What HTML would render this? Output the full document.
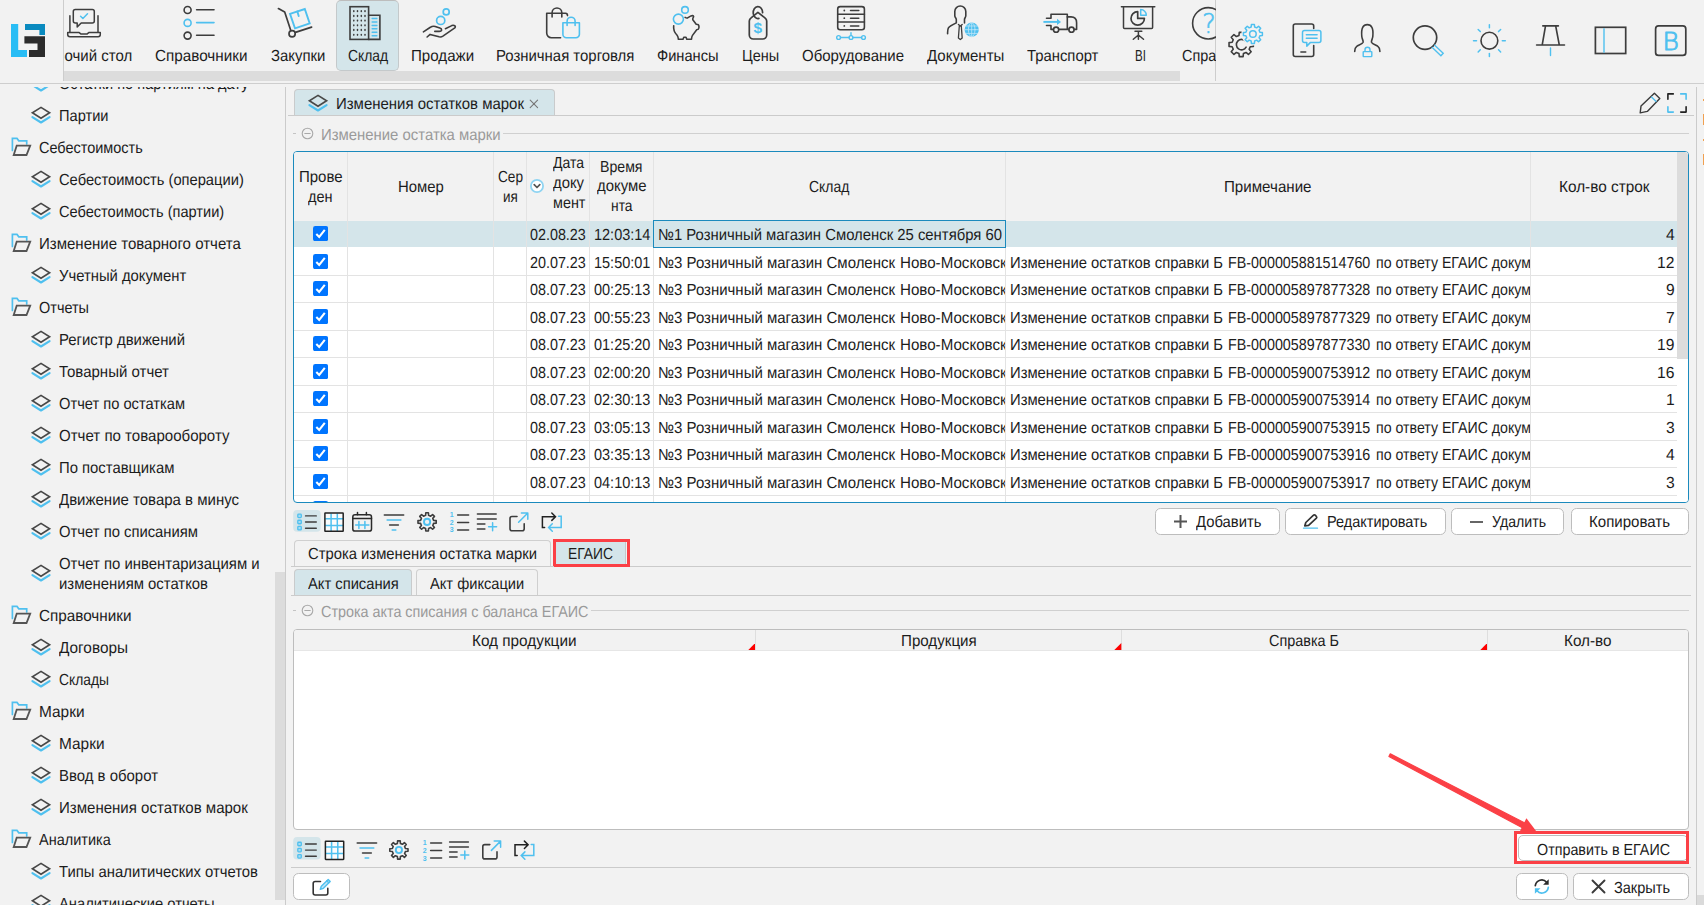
<!DOCTYPE html><html lang="ru"><head><meta charset="utf-8"><title>Изменения остатков марок</title><style>
html,body{margin:0;padding:0}
body{width:1704px;height:905px;overflow:hidden;background:#f2f2f2;position:relative;font-family:"Liberation Sans", sans-serif;font-size:16px;color:#1c1c1c}
.b{position:absolute;box-sizing:border-box}
.t{position:absolute;white-space:nowrap;transform-origin:0 50%;text-rendering:geometricPrecision}
.clip{position:absolute;overflow:hidden}
.btn{position:absolute;box-sizing:border-box;background:#fff;border:1px solid #bdbdbd;border-radius:5.500px}

</style></head><body>
<div class="b" style="left:336.00px;top:0.00px;width:63.00px;height:71.00px;background:#d4e5ea;border:1px solid #c4c9cb;border-top-color:#bdbdbd;border-radius:5px"></div>
<div class="b" style="left:64.00px;top:71.00px;width:1116.00px;height:10.00px;background:#dcdcdc"></div>
<div class="b" style="left:63.00px;top:0.00px;width:1.00px;height:81.00px;background:#cdcdcd"></div>
<div class="b" style="left:1215.00px;top:0.00px;width:1.00px;height:81.00px;background:#cdcdcd"></div>
<div class="b" style="left:0.00px;top:83.00px;width:1704.00px;height:1.00px;background:#cecece"></div>
<svg class="b" style="left:0.00px;top:0.00px;" width="64" height="84" viewBox="0 0 64 84" fill="none" stroke-linecap="round" stroke-linejoin="round">
<path d="M11 24h7.2v26H27v7H11z" fill="#29bdf5"/>
<path d="M25 24h20v11h-5.6v-5H25z" fill="#0a8abf"/>
<path d="M24.4 36.2H45V57H29v-7h8.5v-6.5H24.4z" fill="#2c2c2c"/></svg>
<div class="clip" style="left:64.2px;top:40px;width:80px;height:30px"><div class="t" style="left:-26.10px;top:7px;line-height:20px;transform:scaleX(0.9379);">Рабочий стол</div></div>
<div class="t" style="left:155.00px;top:47px;line-height:20px;transform:scaleX(0.9542);">Справочники</div>
<div class="t" style="left:270.60px;top:47px;line-height:20px;transform:scaleX(0.9324);">Закупки</div>
<div class="t" style="left:347.80px;top:47px;line-height:20px;transform:scaleX(0.8680);">Склад</div>
<div class="t" style="left:410.50px;top:47px;line-height:20px;transform:scaleX(0.9442);">Продажи</div>
<div class="t" style="left:496.20px;top:47px;line-height:20px;transform:scaleX(0.9324);">Розничная торговля</div>
<div class="t" style="left:657.30px;top:47px;line-height:20px;transform:scaleX(0.9171);">Финансы</div>
<div class="t" style="left:742.30px;top:47px;line-height:20px;transform:scaleX(0.9056);">Цены</div>
<div class="t" style="left:802.40px;top:47px;line-height:20px;transform:scaleX(0.9373);">Оборудование</div>
<div class="t" style="left:926.90px;top:47px;line-height:20px;transform:scaleX(0.9371);">Документы</div>
<div class="t" style="left:1027.30px;top:47px;line-height:20px;transform:scaleX(0.9278);">Транспорт</div>
<div class="t" style="left:1134.70px;top:47px;line-height:20px;transform:scaleX(0.7207);">BI</div>
<div class="clip" style="left:1170px;top:40px;width:45.5px;height:30px"><div class="t" style="left:12.40px;top:7px;line-height:20px;transform:scaleX(0.9002);">Справка</div></div>
<svg class="b" style="left:0.00px;top:0.00px;pointer-events:none" width="1216" height="84" viewBox="0 0 1216 84" fill="none" stroke-linecap="round" stroke-linejoin="round"><g stroke="#3d3d3d" stroke-width="1.5"><path d="M69.9 15.8V32M98 15.8V32"/><path d="M67.7 32.6h11.5l1.6 1.3h6.4l1.6-1.3h11.5v2a2.2 2.2 0 0 1-2.2 2.2H69.9a2.2 2.2 0 0 1-2.2-2.2z"/><path d="M75.3 9.6h17a2 2 0 0 1 2 2v9.4a2 2 0 0 1-2 2H81.2l-4 3.9v-3.9h-1.9a2 2 0 0 1-2-2v-9.4a2 2 0 0 1 2-2z"/></g><path d="M80.6 16.2l2.3 2.3 4.6-4.8" stroke="#4fc0ef" stroke-width="1.5"/><circle cx="187.6" cy="10" r="3.5" stroke="#3d3d3d" stroke-width="1.6"/><path d="M196.6 9.7H214" stroke="#3d3d3d" stroke-width="1.6"/><circle cx="187.6" cy="22.9" r="3.5" stroke="#4fc0ef" stroke-width="1.6"/><path d="M196.6 22.599999999999998H214" stroke="#4fc0ef" stroke-width="1.6"/><circle cx="187.6" cy="35.6" r="3.5" stroke="#3d3d3d" stroke-width="1.6"/><path d="M196.6 35.300000000000004H214" stroke="#3d3d3d" stroke-width="1.6"/><g stroke="#3d3d3d" stroke-width="1.7"><path d="M278.4 8.6l6.3 3.5 6 18.2"/><circle cx="292.1" cy="33.8" r="3.1"/><path d="M295.4 32.4l16.2-5.3"/></g><g stroke="#4fc0ef" stroke-width="1.9" stroke-linejoin="miter"><path d="M290 13.9l14.8-4.9 4.9 14.5-14.7 4.8z"/><path d="M297.3 11.4l1.4 4.6"/></g><g stroke="#3d3d3d" stroke-width="1.6" stroke-linejoin="miter"><rect x="350" y="6.7" width="18.6" height="32.7"/><path d="M368.6 15.3h11.3v24.1h-11.3"/></g><g fill="#3d3d3d"><ellipse cx="353.8" cy="11.2" rx="0.8" ry="1.15"/><ellipse cx="353.8" cy="16" rx="0.8" ry="1.15"/><ellipse cx="353.8" cy="20.6" rx="0.8" ry="1.15"/><ellipse cx="353.8" cy="25.3" rx="0.8" ry="1.15"/><ellipse cx="353.8" cy="30" rx="0.8" ry="1.15"/><ellipse cx="353.8" cy="34.8" rx="0.8" ry="1.15"/><ellipse cx="357.5" cy="11.2" rx="0.8" ry="1.15"/><ellipse cx="357.5" cy="16" rx="0.8" ry="1.15"/><ellipse cx="357.5" cy="20.6" rx="0.8" ry="1.15"/><ellipse cx="357.5" cy="25.3" rx="0.8" ry="1.15"/><ellipse cx="357.5" cy="30" rx="0.8" ry="1.15"/><ellipse cx="357.5" cy="34.8" rx="0.8" ry="1.15"/><ellipse cx="361.3" cy="11.2" rx="0.8" ry="1.15"/><ellipse cx="361.3" cy="16" rx="0.8" ry="1.15"/><ellipse cx="361.3" cy="20.6" rx="0.8" ry="1.15"/><ellipse cx="361.3" cy="25.3" rx="0.8" ry="1.15"/><ellipse cx="361.3" cy="30" rx="0.8" ry="1.15"/><ellipse cx="361.3" cy="34.8" rx="0.8" ry="1.15"/><ellipse cx="365" cy="11.2" rx="0.8" ry="1.15"/><ellipse cx="365" cy="16" rx="0.8" ry="1.15"/><ellipse cx="365" cy="20.6" rx="0.8" ry="1.15"/><ellipse cx="365" cy="25.3" rx="0.8" ry="1.15"/><ellipse cx="365" cy="30" rx="0.8" ry="1.15"/><ellipse cx="365" cy="34.8" rx="0.8" ry="1.15"/></g><g stroke="#4fc0ef" stroke-width="1.5"><path d="M372.2 18.6h4.6"/><path d="M372.2 22h4.6"/><path d="M372.2 25.5h4.6"/><path d="M372.2 28.8h4.6"/><path d="M372.2 32.3h4.6"/><path d="M372.2 35.8h4.6"/></g><g stroke="#4fc0ef" stroke-width="1.7"><circle cx="446.2" cy="11.9" r="3"/><circle cx="440.7" cy="20.4" r="4.1"/></g><g stroke="#3d3d3d" stroke-width="1.6"><path d="M423.4 31.8l6.6-4.3c2-1.2 3.4-1.5 5.2-1l4.6 1.6c2.4.8 2.6 3.2-.6 3.3h-4.4"/><path d="M445.4 28.7l6.4-3.1c2.2-1 4.6.6 3 2.3l-11.9 8.3c-1.4.9-2.4.9-3.8.6l-9-2.4-3 2.6"/></g><g stroke="#3d3d3d" stroke-width="1.6"><path d="M560.6 37.7h-9.3a4.6 4.6 0 0 1-4.6-4.6V13.3h18.8c1.3 0 2 .7 2 2.3"/><path d="M552.1 17v-4.2a4.85 4.85 0 0 1 9.7 0V17"/></g><g stroke="#4fc0ef" stroke-width="1.6"><path d="M562.9 22.7h16.5v11.6a3.5 3.5 0 0 1-3.5 3.5h-9.5a3.5 3.5 0 0 1-3.5-3.5z"/><path d="M567.1 25.4v-4.2a4 4 0 0 1 8 0v4.2"/></g><g stroke="#4fc0ef" stroke-width="1.6"><circle cx="685" cy="9.9" r="3.3"/><circle cx="678.4" cy="19.1" r="5"/></g><path d="M673.7 25.8c-.6 4 .9 6.800 3.4 9.5 1 1.200 1.100 2.500 1.300 4h4.600l.8-2h2.200l.8 2h4.700c.1-1.600.2-2.800 1-3.900l4.200-5.600c1.700-.3 2-.4 2.200-1.800.3-2.400.2-3-1.100-3.500l-1.600-.2-3.400-4.500c-.5-1.300 1-2.500.8-3.500-.2-.9-1.600-.8-2.600-.4l-3.400 2c-.8.300-1.700 0-2.500-.5" stroke="#3d3d3d" stroke-width="1.6"/><g stroke="#3d3d3d" stroke-width="1.7"><path d="M757.9 12.3l7 5.500c1.300 1 1.800 1.900 1.800 3.300V35a4 4 0 0 1-4 4h-9.400a4 4 0 0 1-4-4V21.100c0-1.400.5-2.300 1.800-3.300z"/><path d="M762.600 12.700A4.700 6 0 1 0 758.900 18.400"/></g><text x="757.9" y="33.400" text-anchor="middle" font-family="Liberation Sans, sans-serif" font-weight="bold" font-size="15.500" fill="#4fc0ef" stroke="none">$</text><g stroke="#3d3d3d" stroke-width="1.6"><rect x="837.7" y="6.600" width="26.700" height="23.200" rx="2.500"/><path d="M837.700 14.300h26.700M837.700 22h26.700"/><path d="M850.500 10.500h8.300M850.500 18.200h8.300M850.500 25.900h8.300" stroke-width="1.500"/></g><g fill="#3d3d3d"><circle cx="844.300" cy="10.500" r="0.900"/><circle cx="844.300" cy="18.200" r="0.900"/><circle cx="844.300" cy="25.900" r="0.900"/></g><g stroke="#4fc0ef" stroke-width="1.400"><path d="M851 32.600v3M840.500 37.500h8.600M853 37.500h8.600"/><circle cx="838.600" cy="37.500" r="1.900"/><circle cx="851" cy="37.500" r="1.900"/><circle cx="863.500" cy="37.500" r="1.900"/></g><g stroke="#3d3d3d" stroke-width="1.600"><path d="M964.500 23v-3.600c0-1.400 1.300-2 1.300-3.600v-4.300a5.500 5.500 0 0 0-11 0v4.300c0 1.600 1.500 2.200 1.500 3.600v3.500c-3.500 1.700-6.500 3.200-7.800 4.800-1 1.300-.9 2.600-.9 6"/><path d="M958.400 24.400l1.900 1.600 1.900-1.600M959.300 26l-.9 12 1.900 1.500 1.900-1.500-.9-12" stroke-width="1.300"/></g><circle cx="971.700" cy="29.700" r="7.100" fill="#4fc0ef"/><g stroke="#bfe6f8" stroke-width="0.800"><ellipse cx="971.700" cy="29.700" rx="3.300" ry="7"/><path d="M971.700 22.700v14M964.800 29.700h13.800M965.700 26h12M965.700 33.400h12"/></g><g stroke="#3d3d3d" stroke-width="1.600"><path d="M1046.500 18.200h4.500v-3.900h16.300v15"/><path d="M1046.500 25.500h4.500v3.900h2.400M1058.900 29.400h9.900M1074.300 29.400h2.300v-6.600c0-3.600-2.200-5.900-5.600-5.900h-3.700"/><circle cx="1056.100" cy="29.700" r="2.600"/><circle cx="1071.500" cy="29.700" r="2.600"/></g><path d="M1043.400 21.900h14" stroke="#4fc0ef" stroke-width="1.900" stroke-linecap="butt"/><path d="M1057 18.700l4 3.200-4 3.200z" fill="#4fc0ef"/><g stroke="#3d3d3d" stroke-width="1.500"><path d="M1121.400 6.800h33.400M1123.500 6.800v20.700a1 1 0 0 0 1 1h27.100a1 1 0 0 0 1-1V6.800"/><path d="M1135 31.300h6.800M1138.400 31.300v8M1138.400 35l-5.100 4.300M1138.400 35l5.100 4.300"/><path d="M1137.700 11.700a6.700 6.700 0 1 0 6.700 6.700h-6.700z" stroke-width="1.700"/></g><path d="M1140.700 9.600a5.600 5.600 0 0 1 5.600 5.600h-5.600z" stroke="#4fc0ef" stroke-width="1.500"/></svg>
<div class="clip" style="left:1180px;top:0;width:35.5px;height:50px"><svg class="b" style="left:0.00px;top:0.00px;" width="60" height="50" viewBox="0 0 60 50" fill="none" stroke-linecap="round" stroke-linejoin="round"><circle cx="28.300" cy="23.300" r="15.700" stroke="#3d3d3d" stroke-width="1.600"/><text x="28.800" y="33.200" text-anchor="middle" font-family="DejaVu Sans, Liberation Sans, sans-serif" font-weight="200" font-size="26" fill="#4fc0ef" stroke="#4fc0ef" stroke-width="0.500">?</text></svg></div>
<svg class="b" style="left:1216.00px;top:0.00px;" width="488" height="84" viewBox="1216 0 488 84" fill="none" stroke-linecap="round" stroke-linejoin="round"><path d="M1238.96 35.47 L1239.28 32.35 L1243.12 32.35 L1243.44 35.47 L1246.00 36.53 L1248.43 34.55 L1251.15 37.27 L1249.17 39.70 L1250.23 42.26 L1253.35 42.58 L1253.35 46.42 L1250.23 46.74 L1249.17 49.30 L1251.15 51.73 L1248.43 54.45 L1246.00 52.47 L1243.44 53.53 L1243.12 56.65 L1239.28 56.65 L1238.96 53.53 L1236.40 52.47 L1233.97 54.45 L1231.25 51.73 L1233.23 49.30 L1232.17 46.74 L1229.05 46.42 L1229.05 42.58 L1232.17 42.26 L1233.23 39.70 L1231.25 37.27 L1233.97 34.55 L1236.40 36.53Z" stroke="#3d3d3d" stroke-width="1.600" fill="#f2f2f2"/><path d="M1245.500 41.200a5.200 5.200 0 1 0 .6 6" stroke="#3d3d3d" stroke-width="1.600"/><circle cx="1252.900" cy="34" r="11.500" fill="#f2f2f2"/><path d="M1251.16 27.01 L1251.40 24.52 L1254.40 24.52 L1254.64 27.01 L1256.61 27.83 L1258.54 26.23 L1260.67 28.36 L1259.07 30.29 L1259.89 32.26 L1262.38 32.50 L1262.38 35.50 L1259.89 35.74 L1259.07 37.71 L1260.67 39.64 L1258.54 41.77 L1256.61 40.17 L1254.64 40.99 L1254.40 43.48 L1251.40 43.48 L1251.16 40.99 L1249.19 40.17 L1247.26 41.77 L1245.13 39.64 L1246.73 37.71 L1245.91 35.74 L1243.42 35.50 L1243.42 32.50 L1245.91 32.26 L1246.73 30.29 L1245.13 28.36 L1247.26 26.23 L1249.19 27.83Z" stroke="#4fc0ef" stroke-width="1.500" fill="#f2f2f2"/><circle cx="1252.900" cy="34" r="3.300" stroke="#4fc0ef" stroke-width="1.500"/><g stroke="#3d3d3d" stroke-width="1.600"><path d="M1313.700 45.500v9a2 2 0 0 1-2 2h-16.400a2 2 0 0 1-2-2V26a2 2 0 0 1 2-2h16.400a2 2 0 0 1 2 2v2.500"/><path d="M1300.900 52h4.800"/></g><g stroke="#4fc0ef" stroke-width="1.500"><path d="M1304.500 30.500h14.400a2 2 0 0 1 2 2v7.900a2 2 0 0 1-2 2h-8.400l-3.700 3.700v-3.700h-2.300a2 2 0 0 1-2-2v-7.900a2 2 0 0 1 2-2z"/><path d="M1306.300 34.700h10.800M1306.300 38.200h10.800"/></g><path d="M1354.700 51.500c0-2.600.3-4 2-5.200 1.600-1.200 5.900-2.300 6.400-4 .4-1.600-1-3-1.300-5.800-.3-3.300-.6-6.400.9-9.200 1.900-3.600 7.300-3.600 9.200 0 1.500 2.800 1.200 5.900.9 9.200-.3 2.800-1.700 4.200-1.300 5.800.5 1.700 4.800 2.800 6.400 4 1.700 1.200 2 2.600 2 5.200" stroke="#3d3d3d" stroke-width="1.600"/><g stroke="#4fc0ef" stroke-width="1.400"><rect x="1363.200" y="51.600" width="8.600" height="5" rx="0.500"/><path d="M1365 51.400v-1.700a2.500 2.500 0 0 1 5 0v1.700"/></g><circle cx="1425" cy="37.600" r="11.700" stroke="#3d3d3d" stroke-width="1.700"/><path d="M1434.700 45.200l8.500 8-2.300 2.500-8.600-8.100" stroke="#4fc0ef" stroke-width="1.400" stroke-linejoin="miter"/><circle cx="1489.400" cy="40.700" r="8.400" stroke="#3d3d3d" stroke-width="1.600"/><g stroke="#4fc0ef" stroke-width="1.500"><path d="M1502.30 40.70L1505.30 40.70"/><path d="M1498.52 49.82L1500.64 51.94"/><path d="M1489.40 53.60L1489.40 56.60"/><path d="M1480.28 49.82L1478.16 51.94"/><path d="M1476.50 40.70L1473.50 40.70"/><path d="M1480.28 31.58L1478.16 29.46"/><path d="M1489.40 27.80L1489.40 24.80"/><path d="M1498.52 31.58L1500.64 29.46"/></g><g stroke="#3d3d3d" stroke-width="1.600"><path d="M1542.800 25.900h15.600M1545.500 26l-3.300 19M1555.700 26l3.600 19M1536.600 45h27.900"/></g><path d="M1550.500 47.900v7.700" stroke="#4fc0ef" stroke-width="1.400"/><rect x="1595.400" y="27.300" width="30.300" height="26.200" stroke="#3d3d3d" stroke-width="1.700" stroke-linejoin="miter"/><path d="M1604 28.200v24.500" stroke="#4fc0ef" stroke-width="1.400" stroke-linecap="butt"/><rect x="1655.600" y="25.900" width="30.200" height="29.500" rx="3" stroke="#3d3d3d" stroke-width="1.700"/><text x="1670.600" y="49.800" text-anchor="middle" font-family="DejaVu Sans, Liberation Sans, sans-serif" font-weight="200" font-size="25" fill="#4fc0ef" stroke="#4fc0ef" stroke-width="1">B</text></svg>
<div class="clip" style="left:0;top:87px;width:285px;height:818px">
<svg class="b" style="left:30.00px;top:-14.20px;" width="22" height="20" viewBox="0 0 22 20" fill="none" stroke-linecap="round" stroke-linejoin="round"><path d="M2.400 12.100l8.600 5.400 8.600-5.400" stroke="#4fc0ef" stroke-width="2.100"/><path d="M11 2.400l8.600 5.400-8.600 5.400-8.600-5.400z" stroke="#484848" stroke-width="1.650" stroke-linejoin="miter"/></svg>
<div class="t" style="left:58.80px;top:-12px;line-height:20px;transform:scaleX(0.9114);">Остатки по партиям на дату</div>
<svg class="b" style="left:30.00px;top:17.80px;" width="22" height="20" viewBox="0 0 22 20" fill="none" stroke-linecap="round" stroke-linejoin="round"><path d="M2.400 12.100l8.600 5.400 8.600-5.400" stroke="#4fc0ef" stroke-width="2.100"/><path d="M11 2.400l8.600 5.400-8.600 5.400-8.600-5.400z" stroke="#484848" stroke-width="1.650" stroke-linejoin="miter"/></svg>
<div class="t" style="left:58.80px;top:20px;line-height:20px;transform:scaleX(0.9140);">Партии</div>
<svg class="b" style="left:10.50px;top:49.60px;" width="21" height="20" viewBox="0 0 21 20" fill="none" stroke-linecap="round" stroke-linejoin="round"><path d="M1.400 13.500V1.400h4.600l1.800 2.400h7.900v3.200" stroke="#4fc0ef" stroke-width="1.700" stroke-linejoin="miter"/><path d="M5.700 8.700h13.500l-3.700 9.300H2.700z" stroke="#555" stroke-width="1.800" stroke-linejoin="miter"/></svg>
<div class="t" style="left:38.70px;top:52px;line-height:20px;transform:scaleX(0.9041);">Себестоимость</div>
<svg class="b" style="left:30.00px;top:81.80px;" width="22" height="20" viewBox="0 0 22 20" fill="none" stroke-linecap="round" stroke-linejoin="round"><path d="M2.400 12.100l8.600 5.400 8.600-5.400" stroke="#4fc0ef" stroke-width="2.100"/><path d="M11 2.400l8.600 5.400-8.600 5.400-8.600-5.400z" stroke="#484848" stroke-width="1.650" stroke-linejoin="miter"/></svg>
<div class="t" style="left:58.80px;top:84px;line-height:20px;transform:scaleX(0.9189);">Себестоимость (операции)</div>
<svg class="b" style="left:30.00px;top:113.80px;" width="22" height="20" viewBox="0 0 22 20" fill="none" stroke-linecap="round" stroke-linejoin="round"><path d="M2.400 12.100l8.600 5.400 8.600-5.400" stroke="#4fc0ef" stroke-width="2.100"/><path d="M11 2.400l8.600 5.400-8.600 5.400-8.600-5.400z" stroke="#484848" stroke-width="1.650" stroke-linejoin="miter"/></svg>
<div class="t" style="left:58.80px;top:116px;line-height:20px;transform:scaleX(0.9121);">Себестоимость (партии)</div>
<svg class="b" style="left:10.50px;top:145.60px;" width="21" height="20" viewBox="0 0 21 20" fill="none" stroke-linecap="round" stroke-linejoin="round"><path d="M1.400 13.500V1.400h4.600l1.800 2.400h7.900v3.200" stroke="#4fc0ef" stroke-width="1.700" stroke-linejoin="miter"/><path d="M5.700 8.700h13.500l-3.700 9.300H2.700z" stroke="#555" stroke-width="1.800" stroke-linejoin="miter"/></svg>
<div class="t" style="left:38.70px;top:148px;line-height:20px;transform:scaleX(0.9389);">Изменение товарного отчета</div>
<svg class="b" style="left:30.00px;top:177.80px;" width="22" height="20" viewBox="0 0 22 20" fill="none" stroke-linecap="round" stroke-linejoin="round"><path d="M2.400 12.100l8.600 5.400 8.600-5.400" stroke="#4fc0ef" stroke-width="2.100"/><path d="M11 2.400l8.600 5.400-8.600 5.400-8.600-5.400z" stroke="#484848" stroke-width="1.650" stroke-linejoin="miter"/></svg>
<div class="t" style="left:58.80px;top:180px;line-height:20px;transform:scaleX(0.9270);">Учетный документ</div>
<svg class="b" style="left:10.50px;top:209.60px;" width="21" height="20" viewBox="0 0 21 20" fill="none" stroke-linecap="round" stroke-linejoin="round"><path d="M1.400 13.500V1.400h4.600l1.800 2.400h7.900v3.200" stroke="#4fc0ef" stroke-width="1.700" stroke-linejoin="miter"/><path d="M5.700 8.700h13.500l-3.700 9.300H2.700z" stroke="#555" stroke-width="1.800" stroke-linejoin="miter"/></svg>
<div class="t" style="left:38.70px;top:212px;line-height:20px;transform:scaleX(0.9040);">Отчеты</div>
<svg class="b" style="left:30.00px;top:241.80px;" width="22" height="20" viewBox="0 0 22 20" fill="none" stroke-linecap="round" stroke-linejoin="round"><path d="M2.400 12.100l8.600 5.400 8.600-5.400" stroke="#4fc0ef" stroke-width="2.100"/><path d="M11 2.400l8.600 5.400-8.600 5.400-8.600-5.400z" stroke="#484848" stroke-width="1.650" stroke-linejoin="miter"/></svg>
<div class="t" style="left:58.80px;top:244px;line-height:20px;transform:scaleX(0.9305);">Регистр движений</div>
<svg class="b" style="left:30.00px;top:273.80px;" width="22" height="20" viewBox="0 0 22 20" fill="none" stroke-linecap="round" stroke-linejoin="round"><path d="M2.400 12.100l8.600 5.400 8.600-5.400" stroke="#4fc0ef" stroke-width="2.100"/><path d="M11 2.400l8.600 5.400-8.600 5.400-8.600-5.400z" stroke="#484848" stroke-width="1.650" stroke-linejoin="miter"/></svg>
<div class="t" style="left:58.80px;top:276px;line-height:20px;transform:scaleX(0.9388);">Товарный отчет</div>
<svg class="b" style="left:30.00px;top:305.80px;" width="22" height="20" viewBox="0 0 22 20" fill="none" stroke-linecap="round" stroke-linejoin="round"><path d="M2.400 12.100l8.600 5.400 8.600-5.400" stroke="#4fc0ef" stroke-width="2.100"/><path d="M11 2.400l8.600 5.400-8.600 5.400-8.600-5.400z" stroke="#484848" stroke-width="1.650" stroke-linejoin="miter"/></svg>
<div class="t" style="left:58.80px;top:308px;line-height:20px;transform:scaleX(0.9168);">Отчет по остаткам</div>
<svg class="b" style="left:30.00px;top:337.80px;" width="22" height="20" viewBox="0 0 22 20" fill="none" stroke-linecap="round" stroke-linejoin="round"><path d="M2.400 12.100l8.600 5.400 8.600-5.400" stroke="#4fc0ef" stroke-width="2.100"/><path d="M11 2.400l8.600 5.400-8.600 5.400-8.600-5.400z" stroke="#484848" stroke-width="1.650" stroke-linejoin="miter"/></svg>
<div class="t" style="left:58.80px;top:340px;line-height:20px;transform:scaleX(0.9408);">Отчет по товарообороту</div>
<svg class="b" style="left:30.00px;top:369.80px;" width="22" height="20" viewBox="0 0 22 20" fill="none" stroke-linecap="round" stroke-linejoin="round"><path d="M2.400 12.100l8.600 5.400 8.600-5.400" stroke="#4fc0ef" stroke-width="2.100"/><path d="M11 2.400l8.600 5.400-8.600 5.400-8.600-5.400z" stroke="#484848" stroke-width="1.650" stroke-linejoin="miter"/></svg>
<div class="t" style="left:58.80px;top:372px;line-height:20px;transform:scaleX(0.9283);">По поставщикам</div>
<svg class="b" style="left:30.00px;top:401.80px;" width="22" height="20" viewBox="0 0 22 20" fill="none" stroke-linecap="round" stroke-linejoin="round"><path d="M2.400 12.100l8.600 5.400 8.600-5.400" stroke="#4fc0ef" stroke-width="2.100"/><path d="M11 2.400l8.600 5.400-8.600 5.400-8.600-5.400z" stroke="#484848" stroke-width="1.650" stroke-linejoin="miter"/></svg>
<div class="t" style="left:58.80px;top:404px;line-height:20px;transform:scaleX(0.9373);">Движение товара в минус</div>
<svg class="b" style="left:30.00px;top:433.80px;" width="22" height="20" viewBox="0 0 22 20" fill="none" stroke-linecap="round" stroke-linejoin="round"><path d="M2.400 12.100l8.600 5.400 8.600-5.400" stroke="#4fc0ef" stroke-width="2.100"/><path d="M11 2.400l8.600 5.400-8.600 5.400-8.600-5.400z" stroke="#484848" stroke-width="1.650" stroke-linejoin="miter"/></svg>
<div class="t" style="left:58.80px;top:436px;line-height:20px;transform:scaleX(0.9254);">Отчет по списаниям</div>
<svg class="b" style="left:30.00px;top:475.80px;" width="22" height="20" viewBox="0 0 22 20" fill="none" stroke-linecap="round" stroke-linejoin="round"><path d="M2.400 12.100l8.600 5.400 8.600-5.400" stroke="#4fc0ef" stroke-width="2.100"/><path d="M11 2.400l8.600 5.400-8.600 5.400-8.600-5.400z" stroke="#484848" stroke-width="1.650" stroke-linejoin="miter"/></svg>
<div class="t" style="left:58.80px;top:468px;line-height:20px;transform:scaleX(0.9315);">Отчет по инвентаризациям и</div>
<div class="t" style="left:58.80px;top:488px;line-height:20px;transform:scaleX(0.9295);">изменениям остатков</div>
<svg class="b" style="left:10.50px;top:517.60px;" width="21" height="20" viewBox="0 0 21 20" fill="none" stroke-linecap="round" stroke-linejoin="round"><path d="M1.400 13.500V1.400h4.600l1.800 2.400h7.900v3.200" stroke="#4fc0ef" stroke-width="1.700" stroke-linejoin="miter"/><path d="M5.700 8.700h13.500l-3.700 9.300H2.700z" stroke="#555" stroke-width="1.800" stroke-linejoin="miter"/></svg>
<div class="t" style="left:38.70px;top:520px;line-height:20px;transform:scaleX(0.9542);">Справочники</div>
<svg class="b" style="left:30.00px;top:549.80px;" width="22" height="20" viewBox="0 0 22 20" fill="none" stroke-linecap="round" stroke-linejoin="round"><path d="M2.400 12.100l8.600 5.400 8.600-5.400" stroke="#4fc0ef" stroke-width="2.100"/><path d="M11 2.400l8.600 5.400-8.600 5.400-8.600-5.400z" stroke="#484848" stroke-width="1.650" stroke-linejoin="miter"/></svg>
<div class="t" style="left:58.80px;top:552px;line-height:20px;transform:scaleX(0.9594);">Договоры</div>
<svg class="b" style="left:30.00px;top:581.80px;" width="22" height="20" viewBox="0 0 22 20" fill="none" stroke-linecap="round" stroke-linejoin="round"><path d="M2.400 12.100l8.600 5.400 8.600-5.400" stroke="#4fc0ef" stroke-width="2.100"/><path d="M11 2.400l8.600 5.400-8.600 5.400-8.600-5.400z" stroke="#484848" stroke-width="1.650" stroke-linejoin="miter"/></svg>
<div class="t" style="left:58.80px;top:584px;line-height:20px;transform:scaleX(0.8649);">Склады</div>
<svg class="b" style="left:10.50px;top:613.60px;" width="21" height="20" viewBox="0 0 21 20" fill="none" stroke-linecap="round" stroke-linejoin="round"><path d="M1.400 13.500V1.400h4.600l1.800 2.400h7.900v3.200" stroke="#4fc0ef" stroke-width="1.700" stroke-linejoin="miter"/><path d="M5.700 8.700h13.500l-3.700 9.300H2.700z" stroke="#555" stroke-width="1.800" stroke-linejoin="miter"/></svg>
<div class="t" style="left:38.70px;top:616px;line-height:20px;transform:scaleX(0.9630);">Марки</div>
<svg class="b" style="left:30.00px;top:645.80px;" width="22" height="20" viewBox="0 0 22 20" fill="none" stroke-linecap="round" stroke-linejoin="round"><path d="M2.400 12.100l8.600 5.400 8.600-5.400" stroke="#4fc0ef" stroke-width="2.100"/><path d="M11 2.400l8.600 5.400-8.600 5.400-8.600-5.400z" stroke="#484848" stroke-width="1.650" stroke-linejoin="miter"/></svg>
<div class="t" style="left:58.80px;top:648px;line-height:20px;transform:scaleX(0.9630);">Марки</div>
<svg class="b" style="left:30.00px;top:677.80px;" width="22" height="20" viewBox="0 0 22 20" fill="none" stroke-linecap="round" stroke-linejoin="round"><path d="M2.400 12.100l8.600 5.400 8.600-5.400" stroke="#4fc0ef" stroke-width="2.100"/><path d="M11 2.400l8.600 5.400-8.600 5.400-8.600-5.400z" stroke="#484848" stroke-width="1.650" stroke-linejoin="miter"/></svg>
<div class="t" style="left:58.80px;top:680px;line-height:20px;transform:scaleX(0.9340);">Ввод в оборот</div>
<svg class="b" style="left:30.00px;top:709.80px;" width="22" height="20" viewBox="0 0 22 20" fill="none" stroke-linecap="round" stroke-linejoin="round"><path d="M2.400 12.100l8.600 5.400 8.600-5.400" stroke="#4fc0ef" stroke-width="2.100"/><path d="M11 2.400l8.600 5.400-8.600 5.400-8.600-5.400z" stroke="#484848" stroke-width="1.650" stroke-linejoin="miter"/></svg>
<div class="t" style="left:58.80px;top:712px;line-height:20px;transform:scaleX(0.9393);">Изменения остатков марок</div>
<svg class="b" style="left:10.50px;top:741.60px;" width="21" height="20" viewBox="0 0 21 20" fill="none" stroke-linecap="round" stroke-linejoin="round"><path d="M1.400 13.500V1.400h4.600l1.800 2.400h7.900v3.200" stroke="#4fc0ef" stroke-width="1.700" stroke-linejoin="miter"/><path d="M5.700 8.700h13.500l-3.700 9.300H2.700z" stroke="#555" stroke-width="1.800" stroke-linejoin="miter"/></svg>
<div class="t" style="left:38.70px;top:744px;line-height:20px;transform:scaleX(0.9065);">Аналитика</div>
<svg class="b" style="left:30.00px;top:773.80px;" width="22" height="20" viewBox="0 0 22 20" fill="none" stroke-linecap="round" stroke-linejoin="round"><path d="M2.400 12.100l8.600 5.400 8.600-5.400" stroke="#4fc0ef" stroke-width="2.100"/><path d="M11 2.400l8.600 5.400-8.600 5.400-8.600-5.400z" stroke="#484848" stroke-width="1.650" stroke-linejoin="miter"/></svg>
<div class="t" style="left:58.80px;top:776px;line-height:20px;transform:scaleX(0.9276);">Типы аналитических отчетов</div>
<svg class="b" style="left:30.00px;top:805.80px;" width="22" height="20" viewBox="0 0 22 20" fill="none" stroke-linecap="round" stroke-linejoin="round"><path d="M2.400 12.100l8.600 5.400 8.600-5.400" stroke="#4fc0ef" stroke-width="2.100"/><path d="M11 2.400l8.600 5.400-8.600 5.400-8.600-5.400z" stroke="#484848" stroke-width="1.650" stroke-linejoin="miter"/></svg>
<div class="t" style="left:58.80px;top:808px;line-height:20px;transform:scaleX(0.9220);">Аналитические отчеты</div>
</div>
<div class="b" style="left:274.50px;top:572.00px;width:10.00px;height:327.50px;background:#dcdcdc"></div>
<div class="b" style="left:285.00px;top:87.00px;width:1.00px;height:818.00px;background:#cbcbcb"></div>
<div class="b" style="left:1696.00px;top:87.00px;width:1.00px;height:818.00px;background:#cbcbcb"></div>
<div class="b" style="left:1697.00px;top:895.00px;width:7.00px;height:10.00px;background:#dadada"></div>
<div class="b" style="left:1703.00px;top:99.00px;width:1.00px;height:1.50px;background:#f0a050"></div>
<div class="b" style="left:1703.00px;top:114.00px;width:1.00px;height:11.00px;background:#f0a050"></div>
<div class="b" style="left:1703.00px;top:139.00px;width:1.00px;height:1.50px;background:#f0a050"></div>
<div class="b" style="left:1703.00px;top:154.00px;width:1.00px;height:11.00px;background:#f0a050"></div>
<div class="b" style="left:294.00px;top:89.00px;width:260.50px;height:26.50px;background:#d4e5ea;border:1px solid #c9cbcc;border-bottom:none;border-radius:4px 4px 0 0"></div>
<div class="b" style="left:288.00px;top:115.00px;width:1406.00px;height:1.00px;background:#cbcbcb"></div>
<svg class="b" style="left:307.00px;top:93.00px;" width="22" height="20" viewBox="0 0 22 20" fill="none" stroke-linecap="round" stroke-linejoin="round"><path d="M2.400 12.100l8.600 5.400 8.600-5.400" stroke="#4fc0ef" stroke-width="2.100"/><path d="M11 2.400l8.600 5.400-8.600 5.400-8.600-5.400z" stroke="#484848" stroke-width="1.650" stroke-linejoin="miter"/></svg>
<div class="t" style="left:336.00px;top:95px;line-height:20px;transform:scaleX(0.9353);">Изменения остатков марок</div>
<svg class="b" style="left:529.00px;top:98.50px;" width="10" height="10" viewBox="0 0 10 10" fill="none" stroke-linecap="round" stroke-linejoin="round"><path d="M1.200 1.200l7.400 7.400M8.600 1.200l-7.400 7.400" stroke="#777" stroke-width="1.100"/></svg>
<svg class="b" style="left:1630.00px;top:86.00px;" width="34" height="34" viewBox="1630 86 34 34" fill="none" stroke-linecap="round" stroke-linejoin="round"><path d="M1654.400 93.300l5.400 5.100-12.500 13-7.100 1.500.8-6.800z" stroke="#3a3a3a" stroke-width="1.400" stroke-linejoin="round"/><path d="M1651.200 96.700l5.200 5" stroke="#4fc0ef" stroke-width="1.400" stroke-linecap="butt"/></svg>
<svg class="b" style="left:1666.00px;top:92.00px;" width="22" height="22" viewBox="0 0 22 22" fill="none" stroke-linecap="round" stroke-linejoin="round"><path d="M1.900 7.200v-5.300h5.400M14.700 20.100h5.400v-5.300" stroke="#222" stroke-width="1.600" stroke-linejoin="round" stroke-linecap="round"/><path d="M14.700 1.900h5.400v5.300M7.300 20.100h-5.400v-5.300" stroke="#4fc0ef" stroke-width="1.600" stroke-linejoin="round" stroke-linecap="round"/></svg>
<div class="b" style="left:293.00px;top:133.20px;width:3.00px;height:1.00px;background:#c4c4c4"></div><svg class="b" style="left:301.00px;top:127.00px;" width="13" height="13" viewBox="0 0 13 13" fill="none" stroke-linecap="round" stroke-linejoin="round"><circle cx="6.500" cy="6.500" r="5.300" stroke="#a9a9a9" stroke-width="1.100"/><path d="M3.800 6.500h5.400" stroke="#a9a9a9" stroke-width="1.100"/></svg><div class="t" style="left:320.90px;top:126px;line-height:20px;transform:scaleX(0.9309);color:#9a9a9a;">Изменение остатка марки</div><div class="b" style="left:503.00px;top:132.90px;width:1186.00px;height:1.00px;background:#d0d0d0"></div>
<div class="b" style="left:293px;top:151px;width:1396px;height:352px;border:1px solid #1b8abd;border-radius:4px;background:#fff;overflow:hidden">
<div class="b" style="left:0.00px;top:0.00px;width:1394.00px;height:69.00px;background:#f2f2f2"></div>
<div class="b" style="left:0.00px;top:69.00px;width:1383.00px;height:26.00px;background:#d4e5ea"></div>
<div class="b" style="left:0.00px;top:123.00px;width:1383.00px;height:1.00px;background:#e3e3e3"></div>
<div class="b" style="left:0.00px;top:150.00px;width:1383.00px;height:1.00px;background:#e3e3e3"></div>
<div class="b" style="left:0.00px;top:178.00px;width:1383.00px;height:1.00px;background:#e3e3e3"></div>
<div class="b" style="left:0.00px;top:205.00px;width:1383.00px;height:1.00px;background:#e3e3e3"></div>
<div class="b" style="left:0.00px;top:233.00px;width:1383.00px;height:1.00px;background:#e3e3e3"></div>
<div class="b" style="left:0.00px;top:260.00px;width:1383.00px;height:1.00px;background:#e3e3e3"></div>
<div class="b" style="left:0.00px;top:288.00px;width:1383.00px;height:1.00px;background:#e3e3e3"></div>
<div class="b" style="left:0.00px;top:315.00px;width:1383.00px;height:1.00px;background:#e3e3e3"></div>
<div class="b" style="left:0.00px;top:343.00px;width:1383.00px;height:1.00px;background:#e3e3e3"></div>
<div class="b" style="left:0.00px;top:370.00px;width:1383.00px;height:1.00px;background:#e3e3e3"></div>
<div class="b" style="left:53.00px;top:0.00px;width:1.00px;height:351.00px;background:#e3e3e3"></div>
<div class="b" style="left:199.00px;top:0.00px;width:1.00px;height:351.00px;background:#e3e3e3"></div>
<div class="b" style="left:232.00px;top:0.00px;width:1.00px;height:351.00px;background:#e3e3e3"></div>
<div class="b" style="left:295.00px;top:0.00px;width:1.00px;height:351.00px;background:#e3e3e3"></div>
<div class="b" style="left:359.00px;top:0.00px;width:1.00px;height:351.00px;background:#e3e3e3"></div>
<div class="b" style="left:711.00px;top:0.00px;width:1.00px;height:351.00px;background:#e3e3e3"></div>
<div class="b" style="left:1236.00px;top:0.00px;width:1.00px;height:351.00px;background:#e3e3e3"></div>
<div class="b" style="left:1383.00px;top:0.00px;width:11.00px;height:351.00px;background:#fff"></div>
<div class="b" style="left:1383.00px;top:0.00px;width:10.50px;height:206.70px;background:#dcdcdc"></div>
<div class="t" style="left:4.70px;top:16px;line-height:20px;transform:scaleX(0.9373);">Прове</div>
<div class="t" style="left:14.25px;top:36px;line-height:20px;transform:scaleX(0.9048);">ден</div>
<div class="t" style="left:103.60px;top:26px;line-height:20px;transform:scaleX(0.9299);">Номер</div>
<div class="t" style="left:203.50px;top:16px;line-height:20px;transform:scaleX(0.8515);">Сер</div>
<div class="t" style="left:208.60px;top:36px;line-height:20px;transform:scaleX(0.8405);">ия</div>
<div class="t" style="left:259.40px;top:2px;line-height:20px;transform:scaleX(0.8748);">Дата</div>
<div class="t" style="left:259.40px;top:22px;line-height:20px;transform:scaleX(0.9275);">доку</div>
<div class="t" style="left:259.40px;top:42px;line-height:20px;transform:scaleX(0.8984);">мент</div>
<div class="t" style="left:306.05px;top:6px;line-height:20px;transform:scaleX(0.8828);">Время</div>
<div class="t" style="left:302.55px;top:25px;line-height:20px;transform:scaleX(0.9315);">докуме</div>
<div class="t" style="left:316.55px;top:45px;line-height:20px;transform:scaleX(0.8638);">нта</div>
<div class="t" style="left:514.85px;top:26px;line-height:20px;transform:scaleX(0.8702);">Склад</div>
<div class="t" style="left:929.75px;top:26px;line-height:20px;transform:scaleX(0.9448);">Примечание</div>
<div class="t" style="left:1264.75px;top:26px;line-height:20px;transform:scaleX(0.9594);">Кол-во строк</div>
<svg class="b" style="left:235.80px;top:27.10px" width="14" height="14" viewBox="0 0 14 14" fill="none"><circle cx="7" cy="7" r="6.100" fill="#fff" stroke="#8fd4f2" stroke-width="1.800"/><path d="M4.200 5.600L7 8.500l2.800-2.900" stroke="#555" stroke-width="1.700" stroke-linecap="round" stroke-linejoin="round"/></svg>
<svg class="b" style="left:18.90px;top:74.00px" width="15.200" height="15.200" viewBox="0 0 15.200 15.200" fill="none"><rect width="15.200" height="15.200" rx="2.300" fill="#0075ff"/><path d="M3.300 8l2.900 2.900 5.600-7" stroke="#fff" stroke-width="2.100"/></svg>
<div class="t" style="left:236.00px;top:74px;line-height:20px;transform:scaleX(0.8959);">02.08.23</div>
<div class="t" style="left:300.00px;top:74px;line-height:20px;transform:scaleX(0.9056);">12:03:14</div>
<div class="t" style="left:364.00px;top:74px;line-height:20px;transform:scaleX(0.9287);">№1 Розничный магазин Смоленск 25 сентября 60</div>
<div class="t" style="left:1371.50px;top:74px;line-height:20px;transform:scaleX(0.9768);">4</div>
<svg class="b" style="left:18.90px;top:101.50px" width="15.200" height="15.200" viewBox="0 0 15.200 15.200" fill="none"><rect width="15.200" height="15.200" rx="2.300" fill="#0075ff"/><path d="M3.300 8l2.900 2.900 5.600-7" stroke="#fff" stroke-width="2.100"/></svg>
<div class="t" style="left:236.00px;top:102px;line-height:20px;transform:scaleX(0.8959);">20.07.23</div>
<div class="t" style="left:300.00px;top:102px;line-height:20px;transform:scaleX(0.9056);">15:50:01</div>
<div class="clip" style="left:360px;top:98px;width:351.2px;height:24px"><div class="t" style="left:4.00px;top:4px;line-height:20px;transform:scaleX(0.9361);">№3 Розничный магазин Смоленск</div><div class="t" style="left:245.80px;top:4px;line-height:20px;transform:scaleX(0.9451);">Ново-Московская</div></div>
<div class="clip" style="left:712px;top:98px;width:524px;height:24px"><div class="t" style="left:4.00px;top:4px;line-height:20px;transform:scaleX(0.9246);">Изменение остатков справки Б</div><div class="t" style="left:222.20px;top:4px;line-height:20px;transform:scaleX(0.8936);">FB-000005881514760</div><div class="t" style="left:370.00px;top:4px;line-height:20px;transform:scaleX(0.8847);">по ответу ЕГАИС документ</div></div>
<div class="t" style="left:1362.80px;top:102px;line-height:20px;transform:scaleX(0.9777);">12</div>
<svg class="b" style="left:18.90px;top:129.00px" width="15.200" height="15.200" viewBox="0 0 15.200 15.200" fill="none"><rect width="15.200" height="15.200" rx="2.300" fill="#0075ff"/><path d="M3.300 8l2.900 2.900 5.600-7" stroke="#fff" stroke-width="2.100"/></svg>
<div class="t" style="left:236.00px;top:129px;line-height:20px;transform:scaleX(0.8959);">08.07.23</div>
<div class="t" style="left:300.00px;top:129px;line-height:20px;transform:scaleX(0.9056);">00:25:13</div>
<div class="clip" style="left:360px;top:125px;width:351.2px;height:24px"><div class="t" style="left:4.00px;top:4px;line-height:20px;transform:scaleX(0.9361);">№3 Розничный магазин Смоленск</div><div class="t" style="left:245.80px;top:4px;line-height:20px;transform:scaleX(0.9451);">Ново-Московская</div></div>
<div class="clip" style="left:712px;top:125px;width:524px;height:24px"><div class="t" style="left:4.00px;top:4px;line-height:20px;transform:scaleX(0.9246);">Изменение остатков справки Б</div><div class="t" style="left:222.20px;top:4px;line-height:20px;transform:scaleX(0.8936);">FB-000005897877328</div><div class="t" style="left:370.00px;top:4px;line-height:20px;transform:scaleX(0.8847);">по ответу ЕГАИС документ</div></div>
<div class="t" style="left:1371.50px;top:129px;line-height:20px;transform:scaleX(0.9768);">9</div>
<svg class="b" style="left:18.90px;top:156.50px" width="15.200" height="15.200" viewBox="0 0 15.200 15.200" fill="none"><rect width="15.200" height="15.200" rx="2.300" fill="#0075ff"/><path d="M3.300 8l2.900 2.900 5.600-7" stroke="#fff" stroke-width="2.100"/></svg>
<div class="t" style="left:236.00px;top:157px;line-height:20px;transform:scaleX(0.8959);">08.07.23</div>
<div class="t" style="left:300.00px;top:157px;line-height:20px;transform:scaleX(0.9056);">00:55:23</div>
<div class="clip" style="left:360px;top:153px;width:351.2px;height:24px"><div class="t" style="left:4.00px;top:4px;line-height:20px;transform:scaleX(0.9361);">№3 Розничный магазин Смоленск</div><div class="t" style="left:245.80px;top:4px;line-height:20px;transform:scaleX(0.9451);">Ново-Московская</div></div>
<div class="clip" style="left:712px;top:153px;width:524px;height:24px"><div class="t" style="left:4.00px;top:4px;line-height:20px;transform:scaleX(0.9246);">Изменение остатков справки Б</div><div class="t" style="left:222.20px;top:4px;line-height:20px;transform:scaleX(0.8936);">FB-000005897877329</div><div class="t" style="left:370.00px;top:4px;line-height:20px;transform:scaleX(0.8847);">по ответу ЕГАИС документ</div></div>
<div class="t" style="left:1371.50px;top:157px;line-height:20px;transform:scaleX(0.9768);">7</div>
<svg class="b" style="left:18.90px;top:184.00px" width="15.200" height="15.200" viewBox="0 0 15.200 15.200" fill="none"><rect width="15.200" height="15.200" rx="2.300" fill="#0075ff"/><path d="M3.300 8l2.900 2.900 5.600-7" stroke="#fff" stroke-width="2.100"/></svg>
<div class="t" style="left:236.00px;top:184px;line-height:20px;transform:scaleX(0.8959);">08.07.23</div>
<div class="t" style="left:300.00px;top:184px;line-height:20px;transform:scaleX(0.9056);">01:25:20</div>
<div class="clip" style="left:360px;top:180px;width:351.2px;height:24px"><div class="t" style="left:4.00px;top:4px;line-height:20px;transform:scaleX(0.9361);">№3 Розничный магазин Смоленск</div><div class="t" style="left:245.80px;top:4px;line-height:20px;transform:scaleX(0.9451);">Ново-Московская</div></div>
<div class="clip" style="left:712px;top:180px;width:524px;height:24px"><div class="t" style="left:4.00px;top:4px;line-height:20px;transform:scaleX(0.9246);">Изменение остатков справки Б</div><div class="t" style="left:222.20px;top:4px;line-height:20px;transform:scaleX(0.8936);">FB-000005897877330</div><div class="t" style="left:370.00px;top:4px;line-height:20px;transform:scaleX(0.8847);">по ответу ЕГАИС документ</div></div>
<div class="t" style="left:1362.80px;top:184px;line-height:20px;transform:scaleX(0.9777);">19</div>
<svg class="b" style="left:18.90px;top:211.50px" width="15.200" height="15.200" viewBox="0 0 15.200 15.200" fill="none"><rect width="15.200" height="15.200" rx="2.300" fill="#0075ff"/><path d="M3.300 8l2.900 2.900 5.600-7" stroke="#fff" stroke-width="2.100"/></svg>
<div class="t" style="left:236.00px;top:212px;line-height:20px;transform:scaleX(0.8959);">08.07.23</div>
<div class="t" style="left:300.00px;top:212px;line-height:20px;transform:scaleX(0.9056);">02:00:20</div>
<div class="clip" style="left:360px;top:208px;width:351.2px;height:24px"><div class="t" style="left:4.00px;top:4px;line-height:20px;transform:scaleX(0.9361);">№3 Розничный магазин Смоленск</div><div class="t" style="left:245.80px;top:4px;line-height:20px;transform:scaleX(0.9451);">Ново-Московская</div></div>
<div class="clip" style="left:712px;top:208px;width:524px;height:24px"><div class="t" style="left:4.00px;top:4px;line-height:20px;transform:scaleX(0.9246);">Изменение остатков справки Б</div><div class="t" style="left:222.20px;top:4px;line-height:20px;transform:scaleX(0.8936);">FB-000005900753912</div><div class="t" style="left:370.00px;top:4px;line-height:20px;transform:scaleX(0.8847);">по ответу ЕГАИС документ</div></div>
<div class="t" style="left:1362.80px;top:212px;line-height:20px;transform:scaleX(0.9777);">16</div>
<svg class="b" style="left:18.90px;top:239.00px" width="15.200" height="15.200" viewBox="0 0 15.200 15.200" fill="none"><rect width="15.200" height="15.200" rx="2.300" fill="#0075ff"/><path d="M3.300 8l2.900 2.900 5.600-7" stroke="#fff" stroke-width="2.100"/></svg>
<div class="t" style="left:236.00px;top:239px;line-height:20px;transform:scaleX(0.8959);">08.07.23</div>
<div class="t" style="left:300.00px;top:239px;line-height:20px;transform:scaleX(0.9056);">02:30:13</div>
<div class="clip" style="left:360px;top:235px;width:351.2px;height:24px"><div class="t" style="left:4.00px;top:4px;line-height:20px;transform:scaleX(0.9361);">№3 Розничный магазин Смоленск</div><div class="t" style="left:245.80px;top:4px;line-height:20px;transform:scaleX(0.9451);">Ново-Московская</div></div>
<div class="clip" style="left:712px;top:235px;width:524px;height:24px"><div class="t" style="left:4.00px;top:4px;line-height:20px;transform:scaleX(0.9246);">Изменение остатков справки Б</div><div class="t" style="left:222.20px;top:4px;line-height:20px;transform:scaleX(0.8936);">FB-000005900753914</div><div class="t" style="left:370.00px;top:4px;line-height:20px;transform:scaleX(0.8847);">по ответу ЕГАИС документ</div></div>
<div class="t" style="left:1371.50px;top:239px;line-height:20px;transform:scaleX(0.9768);">1</div>
<svg class="b" style="left:18.90px;top:266.50px" width="15.200" height="15.200" viewBox="0 0 15.200 15.200" fill="none"><rect width="15.200" height="15.200" rx="2.300" fill="#0075ff"/><path d="M3.300 8l2.900 2.900 5.600-7" stroke="#fff" stroke-width="2.100"/></svg>
<div class="t" style="left:236.00px;top:267px;line-height:20px;transform:scaleX(0.8959);">08.07.23</div>
<div class="t" style="left:300.00px;top:267px;line-height:20px;transform:scaleX(0.9056);">03:05:13</div>
<div class="clip" style="left:360px;top:263px;width:351.2px;height:24px"><div class="t" style="left:4.00px;top:4px;line-height:20px;transform:scaleX(0.9361);">№3 Розничный магазин Смоленск</div><div class="t" style="left:245.80px;top:4px;line-height:20px;transform:scaleX(0.9451);">Ново-Московская</div></div>
<div class="clip" style="left:712px;top:263px;width:524px;height:24px"><div class="t" style="left:4.00px;top:4px;line-height:20px;transform:scaleX(0.9246);">Изменение остатков справки Б</div><div class="t" style="left:222.20px;top:4px;line-height:20px;transform:scaleX(0.8936);">FB-000005900753915</div><div class="t" style="left:370.00px;top:4px;line-height:20px;transform:scaleX(0.8847);">по ответу ЕГАИС документ</div></div>
<div class="t" style="left:1371.50px;top:267px;line-height:20px;transform:scaleX(0.9768);">3</div>
<svg class="b" style="left:18.90px;top:294.00px" width="15.200" height="15.200" viewBox="0 0 15.200 15.200" fill="none"><rect width="15.200" height="15.200" rx="2.300" fill="#0075ff"/><path d="M3.300 8l2.900 2.900 5.600-7" stroke="#fff" stroke-width="2.100"/></svg>
<div class="t" style="left:236.00px;top:294px;line-height:20px;transform:scaleX(0.8959);">08.07.23</div>
<div class="t" style="left:300.00px;top:294px;line-height:20px;transform:scaleX(0.9056);">03:35:13</div>
<div class="clip" style="left:360px;top:290px;width:351.2px;height:24px"><div class="t" style="left:4.00px;top:4px;line-height:20px;transform:scaleX(0.9361);">№3 Розничный магазин Смоленск</div><div class="t" style="left:245.80px;top:4px;line-height:20px;transform:scaleX(0.9451);">Ново-Московская</div></div>
<div class="clip" style="left:712px;top:290px;width:524px;height:24px"><div class="t" style="left:4.00px;top:4px;line-height:20px;transform:scaleX(0.9246);">Изменение остатков справки Б</div><div class="t" style="left:222.20px;top:4px;line-height:20px;transform:scaleX(0.8936);">FB-000005900753916</div><div class="t" style="left:370.00px;top:4px;line-height:20px;transform:scaleX(0.8847);">по ответу ЕГАИС документ</div></div>
<div class="t" style="left:1371.50px;top:294px;line-height:20px;transform:scaleX(0.9768);">4</div>
<svg class="b" style="left:18.90px;top:321.50px" width="15.200" height="15.200" viewBox="0 0 15.200 15.200" fill="none"><rect width="15.200" height="15.200" rx="2.300" fill="#0075ff"/><path d="M3.300 8l2.900 2.900 5.600-7" stroke="#fff" stroke-width="2.100"/></svg>
<div class="t" style="left:236.00px;top:322px;line-height:20px;transform:scaleX(0.8959);">08.07.23</div>
<div class="t" style="left:300.00px;top:322px;line-height:20px;transform:scaleX(0.9056);">04:10:13</div>
<div class="clip" style="left:360px;top:318px;width:351.2px;height:24px"><div class="t" style="left:4.00px;top:4px;line-height:20px;transform:scaleX(0.9361);">№3 Розничный магазин Смоленск</div><div class="t" style="left:245.80px;top:4px;line-height:20px;transform:scaleX(0.9451);">Ново-Московская</div></div>
<div class="clip" style="left:712px;top:318px;width:524px;height:24px"><div class="t" style="left:4.00px;top:4px;line-height:20px;transform:scaleX(0.9246);">Изменение остатков справки Б</div><div class="t" style="left:222.20px;top:4px;line-height:20px;transform:scaleX(0.8936);">FB-000005900753917</div><div class="t" style="left:370.00px;top:4px;line-height:20px;transform:scaleX(0.8847);">по ответу ЕГАИС документ</div></div>
<div class="t" style="left:1371.50px;top:322px;line-height:20px;transform:scaleX(0.9768);">3</div>
<svg class="b" style="left:18.90px;top:349.00px" width="15.200" height="15.200" viewBox="0 0 15.200 15.200" fill="none"><rect width="15.200" height="15.200" rx="2.300" fill="#0075ff"/><path d="M3.300 8l2.900 2.900 5.600-7" stroke="#fff" stroke-width="2.100"/></svg>
<div class="b" style="left:359.00px;top:68.00px;width:353.20px;height:28.20px;border:1px solid #1b8abd"></div>
</div>
<svg class="b" style="left:290.00px;top:505.00px;" width="280" height="32" viewBox="290 505 280 32" fill="none" stroke-linecap="round" stroke-linejoin="round"><rect x="293.2" y="510" width="27.5" height="21.8" rx="4" fill="#d4e5ea"/><rect x="297.800" y="514.15" width="3.500" height="3.500" rx="0.800" stroke="#4fc0ef" stroke-width="1.300" fill="#a8dcf3"/><path d="M305.500 515.90h10.800" stroke="#3d3d3d" stroke-width="1.400"/><rect x="297.800" y="520.25" width="3.500" height="3.500" rx="0.800" stroke="#4fc0ef" stroke-width="1.300" fill="#a8dcf3"/><path d="M305.500 522.00h10.800" stroke="#3d3d3d" stroke-width="1.400"/><rect x="297.800" y="526.45" width="3.500" height="3.500" rx="0.800" stroke="#4fc0ef" stroke-width="1.300" fill="#a8dcf3"/><path d="M305.500 528.20h10.800" stroke="#3d3d3d" stroke-width="1.400"/><rect x="324.90" y="513.10" width="18.300" height="18.200" fill="#fbfbfb"/><g stroke="#4fc0ef" stroke-width="1.500" stroke-linecap="butt"><path d="M331.10 513.5v18M337.30 513.5v18M325.3 518.80h18M325.3 525.40h18"/></g><rect x="324.90" y="513.10" width="18.300" height="18.200" rx="0.400" stroke="#222" stroke-width="1.500"/><g stroke="#2a2a2a" stroke-width="1.500"><rect x="352.80" y="514.80" width="18.700" height="16.300" rx="2.200"/><path d="M352.80 518.40h18.700M357.50 512.50v2.300M366.40 512.50v2.300"/></g><g stroke="#4fc0ef" stroke-width="1.500"><path d="M355.60 525.00h13.300M358.90 521.60v6.800M364.90 521.60v6.800"/></g><g stroke-width="1.500"><path d="M384.30 515h19.400" stroke="#3d3d3d"/><path d="M387.10 520h13.800" stroke="#4fc0ef"/><path d="M389.60 525h8.800" stroke="#3d3d3d"/><path d="M392.20 530h3.600" stroke="#4fc0ef"/></g><path d="M425.59 515.37 L425.80 512.79 L428.40 512.79 L428.61 515.37 L430.65 516.21 L432.62 514.54 L434.46 516.38 L432.79 518.35 L433.63 520.39 L436.21 520.60 L436.21 523.20 L433.63 523.41 L432.79 525.45 L434.46 527.42 L432.62 529.26 L430.65 527.59 L428.61 528.43 L428.40 531.01 L425.80 531.01 L425.59 528.43 L423.55 527.59 L421.58 529.26 L419.74 527.42 L421.41 525.45 L420.57 523.41 L417.99 523.20 L417.99 520.60 L420.57 520.39 L421.41 518.35 L419.74 516.38 L421.58 514.54 L423.55 516.21Z" stroke="#3d3d3d" stroke-width="1.600"/><circle cx="427.1" cy="521.90" r="3.100" stroke="#4fc0ef" stroke-width="1.900"/><text x="451.80" y="517.30" text-anchor="middle" font-family="Liberation Sans, sans-serif" font-weight="bold" font-size="7" fill="#4fc0ef" stroke="none">1</text><path d="M457.60 514.90h11" stroke="#3d3d3d" stroke-width="1.500"/><text x="451.80" y="524.80" text-anchor="middle" font-family="Liberation Sans, sans-serif" font-weight="bold" font-size="7" fill="#4fc0ef" stroke="none">2</text><path d="M457.60 522.40h11" stroke="#3d3d3d" stroke-width="1.500"/><text x="451.80" y="532.40" text-anchor="middle" font-family="Liberation Sans, sans-serif" font-weight="bold" font-size="7" fill="#4fc0ef" stroke="none">3</text><path d="M457.60 530.00h11" stroke="#3d3d3d" stroke-width="1.500"/><g stroke="#3d3d3d" stroke-width="1.500"><path d="M477.40 513.90h18.800M477.40 519.00h18.800M477.40 524.00h7.500M477.40 529.00h7.500"/></g><path d="M488.60 526.80h8M492.60 522.80v8" stroke="#4fc0ef" stroke-width="1.500"/><path d="M517.00 516.50h-5a2 2 0 0 0-2 2v10.300a2 2 0 0 0 2 2h10.200a2 2 0 0 0 2-2v-5" stroke="#3d3d3d" stroke-width="1.600"/><path d="M518.60 522.30l9.200-9.300M521.40 513.00h6.400v6.200" stroke="#4fc0ef" stroke-width="1.500"/><path d="M544.60 527.50h-2.200v-10.800h12.600M551.80 513.00l3.700 3.700-3.700 3.700" stroke="#222" stroke-width="1.500" stroke-linejoin="miter"/><path d="M558.60 516.30h2.600v11.200h-12M552.30 523.80l-3.700 3.700 3.700 3.700" stroke="#4fc0ef" stroke-width="1.500" stroke-linejoin="miter"/></svg>
<div class="btn" style="left:1155.2px;top:508.3px;width:124.6px;height:26.4px"></div>
<svg class="b" style="left:1173.00px;top:514.00px;" width="15" height="15" viewBox="0 0 15 15" fill="none" stroke-linecap="round" stroke-linejoin="round"><path d="M7.500 1v13M1 7.500h13" stroke="#555" stroke-width="2" stroke-linecap="butt"/></svg>
<div class="t" style="left:1195.80px;top:513px;line-height:20px;transform:scaleX(0.9262);">Добавить</div>
<div class="btn" style="left:1285.2px;top:508.3px;width:160.5px;height:26.4px"></div>
<svg class="b" style="left:1302.00px;top:513.00px;" width="18" height="17" viewBox="0 0 18 17" fill="none" stroke-linecap="round" stroke-linejoin="round"><path d="M2.800 12.800l1-3.300 7.700-7.300a1.200 1.200 0 0 1 1.700 0l1.200 1.300a1.200 1.200 0 0 1 0 1.700L6.600 12.400z" stroke="#333" stroke-width="1.700"/><path d="M1.500 15.200h14" stroke="#4fc0ef" stroke-width="1.300"/></svg>
<div class="t" style="left:1326.60px;top:513px;line-height:20px;transform:scaleX(0.9065);">Редактировать</div>
<div class="btn" style="left:1451.2px;top:508.3px;width:113.3px;height:26.4px"></div>
<div class="b" style="left:1470.00px;top:520.50px;width:13.20px;height:2.00px;background:#666"></div>
<div class="t" style="left:1492.00px;top:513px;line-height:20px;transform:scaleX(0.8839);">Удалить</div>
<div class="btn" style="left:1570.5px;top:508.3px;width:118.2px;height:26.4px"></div>
<div class="t" style="left:1588.80px;top:513px;line-height:20px;transform:scaleX(0.9402);">Копировать</div>
<div class="b" style="left:294.00px;top:540.00px;width:257.00px;height:26.00px;background:#f2f2f2;border:1px solid #cfcfcf;border-bottom:none;border-radius:4px 4px 0 0"></div>
<div class="t" style="left:308.00px;top:545px;line-height:20px;transform:scaleX(0.9252);">Строка изменения остатка марки</div>
<div class="b" style="left:553.00px;top:539.00px;width:77.00px;height:28.00px;background:#d4e5ea;border:3px solid #fb4046"></div>
<div class="b" style="left:625.00px;top:542.00px;width:1.00px;height:22.00px;background:#c4c8ca"></div>
<div class="b" style="left:626.00px;top:542.00px;width:1.00px;height:22.00px;background:#eef3f4"></div>
<div class="t" style="left:568.20px;top:545px;line-height:20px;transform:scaleX(0.8654);">ЕГАИС</div>
<div class="b" style="left:291.00px;top:566.00px;width:263.00px;height:1.00px;background:#cbcbcb"></div>
<div class="b" style="left:630.00px;top:566.00px;width:1061.00px;height:1.00px;background:#cbcbcb"></div>
<div class="b" style="left:294.00px;top:569.00px;width:118.00px;height:26.00px;background:#d4e5ea;border:1px solid #c9cbcc;border-bottom:none;border-radius:4px 4px 0 0"></div>
<div class="t" style="left:308.00px;top:575px;line-height:20px;transform:scaleX(0.9212);">Акт списания</div>
<div class="b" style="left:416.00px;top:569.00px;width:122.00px;height:26.00px;background:#f2f2f2;border:1px solid #cfcfcf;border-bottom:none;border-radius:4px 4px 0 0"></div>
<div class="t" style="left:430.00px;top:575px;line-height:20px;transform:scaleX(0.9160);">Акт фиксации</div>
<div class="b" style="left:291.00px;top:595.00px;width:1400.00px;height:1.00px;background:#cbcbcb"></div>
<div class="b" style="left:293.00px;top:610.40px;width:3.00px;height:1.00px;background:#c4c4c4"></div><svg class="b" style="left:301.00px;top:604.20px;" width="13" height="13" viewBox="0 0 13 13" fill="none" stroke-linecap="round" stroke-linejoin="round"><circle cx="6.500" cy="6.500" r="5.300" stroke="#a9a9a9" stroke-width="1.100"/><path d="M3.800 6.500h5.400" stroke="#a9a9a9" stroke-width="1.100"/></svg><div class="t" style="left:320.90px;top:603px;line-height:20px;transform:scaleX(0.8980);color:#9a9a9a;">Строка акта списания с баланса ЕГАИС</div><div class="b" style="left:590.90px;top:610.10px;width:1098.10px;height:1.00px;background:#d0d0d0"></div>
<div class="b" style="left:293.20px;top:629.20px;width:1395.80px;height:200.50px;background:#fff;border:1px solid #bdbdbd;border-radius:4px"></div>
<div class="b" style="left:294.20px;top:630.20px;width:1393.80px;height:20.30px;background:#f2f2f2;border-radius:3px 3px 0 0"></div>
<div class="b" style="left:294.20px;top:650.20px;width:1393.80px;height:1.00px;background:#e6e6e6"></div>
<div class="b" style="left:754.70px;top:630.20px;width:1.00px;height:20.30px;background:#dedede"></div>
<svg class="b" style="left:747.80px;top:643.10px;" width="7.3" height="7.3" viewBox="0 0 7.3 7.3" fill="none" stroke-linecap="round" stroke-linejoin="round"><path d="M7.300 0v7.300H0z" fill="#fd0000"/></svg>
<div class="b" style="left:1121.20px;top:630.20px;width:1.00px;height:20.30px;background:#dedede"></div>
<svg class="b" style="left:1114.30px;top:643.10px;" width="7.3" height="7.3" viewBox="0 0 7.3 7.3" fill="none" stroke-linecap="round" stroke-linejoin="round"><path d="M7.300 0v7.300H0z" fill="#fd0000"/></svg>
<div class="b" style="left:1487.00px;top:630.20px;width:1.00px;height:20.30px;background:#dedede"></div>
<svg class="b" style="left:1480.10px;top:643.10px;" width="7.3" height="7.3" viewBox="0 0 7.3 7.3" fill="none" stroke-linecap="round" stroke-linejoin="round"><path d="M7.300 0v7.300H0z" fill="#fd0000"/></svg>
<div class="t" style="left:471.75px;top:632px;line-height:20px;transform:scaleX(0.9575);">Код продукции</div>
<div class="t" style="left:900.95px;top:632px;line-height:20px;transform:scaleX(0.9457);">Продукция</div>
<div class="t" style="left:1269.30px;top:632px;line-height:20px;transform:scaleX(0.9007);">Справка Б</div>
<div class="t" style="left:1564.25px;top:632px;line-height:20px;transform:scaleX(0.9548);">Кол-во</div>
<svg class="b" style="left:290.00px;top:832.00px;" width="260" height="32" viewBox="290 832 260 32" fill="none" stroke-linecap="round" stroke-linejoin="round"><rect x="293.2" y="836.9" width="27.5" height="22.6" rx="4" fill="#d4e5ea"/><rect x="297.800" y="842.25" width="3.500" height="3.500" rx="0.800" stroke="#4fc0ef" stroke-width="1.300" fill="#a8dcf3"/><path d="M305.500 844.00h10.800" stroke="#3d3d3d" stroke-width="1.400"/><rect x="297.800" y="848.35" width="3.500" height="3.500" rx="0.800" stroke="#4fc0ef" stroke-width="1.300" fill="#a8dcf3"/><path d="M305.500 850.10h10.800" stroke="#3d3d3d" stroke-width="1.400"/><rect x="297.800" y="854.55" width="3.500" height="3.500" rx="0.800" stroke="#4fc0ef" stroke-width="1.300" fill="#a8dcf3"/><path d="M305.500 856.30h10.800" stroke="#3d3d3d" stroke-width="1.400"/><rect x="325.40" y="841.20" width="18.300" height="18.200" fill="#fbfbfb"/><g stroke="#4fc0ef" stroke-width="1.500" stroke-linecap="butt"><path d="M331.60 841.6v18M337.80 841.6v18M325.8 846.90h18M325.8 853.50h18"/></g><rect x="325.40" y="841.20" width="18.300" height="18.200" rx="0.400" stroke="#222" stroke-width="1.500"/><g stroke-width="1.500"><path d="M357.20 843.1h19.400" stroke="#3d3d3d"/><path d="M360.00 848.1h13.800" stroke="#4fc0ef"/><path d="M362.50 853.1h8.800" stroke="#3d3d3d"/><path d="M365.10 858.1h3.600" stroke="#4fc0ef"/></g><path d="M397.39 843.47 L397.60 840.89 L400.20 840.89 L400.41 843.47 L402.45 844.31 L404.42 842.64 L406.26 844.48 L404.59 846.45 L405.43 848.49 L408.01 848.70 L408.01 851.30 L405.43 851.51 L404.59 853.55 L406.26 855.52 L404.42 857.36 L402.45 855.69 L400.41 856.53 L400.20 859.11 L397.60 859.11 L397.39 856.53 L395.35 855.69 L393.38 857.36 L391.54 855.52 L393.21 853.55 L392.37 851.51 L389.79 851.30 L389.79 848.70 L392.37 848.49 L393.21 846.45 L391.54 844.48 L393.38 842.64 L395.35 844.31Z" stroke="#3d3d3d" stroke-width="1.600"/><circle cx="398.9" cy="850.00" r="3.100" stroke="#4fc0ef" stroke-width="1.900"/><text x="424.80" y="845.40" text-anchor="middle" font-family="Liberation Sans, sans-serif" font-weight="bold" font-size="7" fill="#4fc0ef" stroke="none">1</text><path d="M430.60 843.00h11" stroke="#3d3d3d" stroke-width="1.500"/><text x="424.80" y="852.90" text-anchor="middle" font-family="Liberation Sans, sans-serif" font-weight="bold" font-size="7" fill="#4fc0ef" stroke="none">2</text><path d="M430.60 850.50h11" stroke="#3d3d3d" stroke-width="1.500"/><text x="424.80" y="860.50" text-anchor="middle" font-family="Liberation Sans, sans-serif" font-weight="bold" font-size="7" fill="#4fc0ef" stroke="none">3</text><path d="M430.60 858.10h11" stroke="#3d3d3d" stroke-width="1.500"/><g stroke="#3d3d3d" stroke-width="1.500"><path d="M449.60 842.00h18.800M449.60 847.10h18.800M449.60 852.10h7.500M449.60 857.10h7.500"/></g><path d="M460.80 854.90h8M464.80 850.90v8" stroke="#4fc0ef" stroke-width="1.500"/><path d="M489.80 844.60h-5a2 2 0 0 0-2 2v10.300a2 2 0 0 0 2 2h10.200a2 2 0 0 0 2-2v-5" stroke="#3d3d3d" stroke-width="1.600"/><path d="M491.40 850.40l9.200-9.300M494.20 841.10h6.400v6.200" stroke="#4fc0ef" stroke-width="1.500"/><path d="M517.20 855.60h-2.200v-10.800h12.600M524.40 841.10l3.700 3.700-3.700 3.700" stroke="#222" stroke-width="1.500" stroke-linejoin="miter"/><path d="M531.20 844.40h2.600v11.200h-12M524.90 851.90l-3.700 3.700 3.700 3.700" stroke="#4fc0ef" stroke-width="1.500" stroke-linejoin="miter"/></svg>
<svg class="b" style="left:1380.00px;top:745.00px;" width="170" height="95" viewBox="1380 745 170 95" fill="none" stroke-linecap="round" stroke-linejoin="round"><polygon points="1388.91,756.53 1522.35,827.79 1524.85,823.01 1390.29,753.87" fill="#fb4046" stroke="#fb4046" stroke-width="1.2" stroke-linejoin="round"/><path d="M1526.4 818.2L1519.4 832.2L1538.2 833.8z" fill="#fb4046"/></svg>
<div class="b" style="left:1514.00px;top:831.00px;width:175.00px;height:33.00px;background:#fff"></div>
<div class="btn" style="left:1518.3px;top:835.2px;width:170px;height:26px;border-radius:5px"></div>
<div class="b" style="left:1514.00px;top:831.00px;width:175.00px;height:33.00px;border:3px solid #fb4046"></div>
<div class="t" style="left:1536.80px;top:841px;line-height:20px;transform:scaleX(0.8943);">Отправить в ЕГАИС</div>
<div class="b" style="left:291.00px;top:867.00px;width:1400.00px;height:1.00px;background:#cbcbcb"></div>
<div class="btn" style="left:293.2px;top:873.2px;width:56.7px;height:26.4px"></div>
<svg class="b" style="left:310.90px;top:877.30px;" width="22" height="20" viewBox="0 0 22 20" fill="none" stroke-linecap="round" stroke-linejoin="round"><path d="M9.500 4.500h-5.300a2 2 0 0 0-2 2v9.500a2 2 0 0 0 2 2h10.600a2 2 0 0 0 2-2v-4.600" stroke="#333" stroke-width="1.600"/><path d="M9.300 12.300l1-3.100 6.900-6.700 2 2-6.800 6.800z" stroke="#4fc0ef" stroke-width="1.400" fill="#bfe6f8"/><path d="M15.700 3.800l2 2" stroke="#4fc0ef" stroke-width="1.300"/></svg>
<div class="btn" style="left:1516.2px;top:873.2px;width:52.2px;height:26.4px"></div>
<svg class="b" style="left:1532.00px;top:877.00px;" width="20" height="19" viewBox="0 0 20 19" fill="none" stroke-linecap="round" stroke-linejoin="round"><path d="M3.300 8.600a6.500 6.500 0 0 1 11.300-3.400" stroke="#2b2b2b" stroke-width="1.700"/><path d="M16.700 2.200v5.600h-5.600z" fill="#2b2b2b"/><path d="M16.300 10.400a6.500 6.500 0 0 1-11.300 3.400" stroke="#4fc0ef" stroke-width="1.700"/><path d="M2.900 16.800v-5.600h5.600z" fill="#4fc0ef"/></svg>
<div class="btn" style="left:1573.4px;top:873.2px;width:115.3px;height:26.4px"></div>
<svg class="b" style="left:1591.00px;top:879.00px;" width="15" height="15" viewBox="0 0 15 15" fill="none" stroke-linecap="round" stroke-linejoin="round"><path d="M1.500 1.500l12 12M13.500 1.500l-12 12" stroke="#3a3a3a" stroke-width="1.900"/></svg>
<div class="t" style="left:1613.80px;top:879px;line-height:20px;transform:scaleX(0.9087);">Закрыть</div>
</body></html>
